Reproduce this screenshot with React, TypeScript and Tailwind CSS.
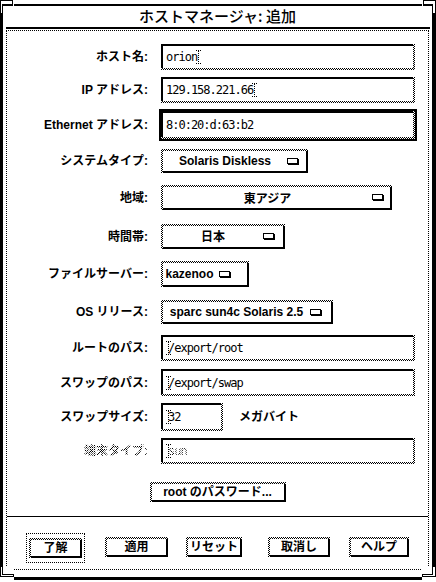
import React from 'react';

const stip = "bg-[repeating-conic-gradient(#000_0_25%,#fff_0_50%)] bg-[length:2px_2px]";

function Cursor({ className = "" }: { className?: string }) {
	return (
		<svg width="5" height="14" viewBox="0 0 5 14" className={className} shapeRendering="crispEdges">
			<path d="M0 0.5H5M2.5 1V13M0 13.5H5" stroke="#000" strokeWidth="1" strokeDasharray="1 1" fill="none" />
		</svg>
	);
}

function MenuMark() {
	return (
		<svg width="12" height="7" viewBox="0 0 12 7" shapeRendering="crispEdges">
			<path d="M0.5 0.5H10.5V5.5H0.5Z" stroke="#000" fill="#fff" />
			<path d="M1 6.5H12M11.5 1V7" stroke="#000" />
		</svg>
	);
}

// sunken text field: black top/left, dithered bottom/right
function Inset({ className, children }: { className: string; children?: React.ReactNode }) {
	return (
		<div className={`${stip} pr-[2px] pb-[2px] ${className}`}>
			<div className="h-full border-t-2 border-l-2 border-black bg-white flex items-center pl-[3px] font-['DejaVu_Sans_Mono',monospace] text-[12px] tracking-[-1px] leading-none">
				{children}
			</div>
		</div>
	);
}

// raised button: dithered top/left, black bottom/right
function Raised({ className, inner = "", children }: { className: string; inner?: string; children?: React.ReactNode }) {
	return (
		<div className={`${stip} pt-[2px] pl-[2px] ${className}`}>
			<div className={`h-full border-r-2 border-b-2 border-black bg-white flex items-center text-[12px] font-bold leading-none ${inner}`}>
				{children}
			</div>
		</div>
	);
}

function Row({ label, className, children, disabled, gap = "ml-[13px]" }: { label: string; className: string; children: React.ReactNode; disabled?: boolean; gap?: string }) {
	return (
		<div className={`flex items-center ${className}`}>
			<div className="w-[141px] text-right text-[12px] font-bold leading-none whitespace-nowrap">
				{disabled ? (
					<span className={`${stip} bg-clip-text text-transparent`}>{label}</span>
				) : label}
			</div>
			<div className={gap}>{children}</div>
		</div>
	);
}

function Menu({ className, inner = "", text, mark }: { className: string; inner?: string; text: string; mark: string }) {
	return (
		<Raised className={className} inner={inner}>
			<span className="flex-1 text-center whitespace-nowrap">{text}</span>
			<span className={`flex ${mark}`}><MenuMark /></span>
		</Raised>
	);
}

export default function App() {
	return (
		<div className="w-[436px] h-[582px] bg-white">
			<div className="relative w-[436px] h-[580px] border-l-[3px] border-r-[4px] border-b-[3px] border-black flex flex-col text-black font-['Liberation_Sans','Noto_Sans_CJK_JP',sans-serif]">
				{/* window corners */}
				<svg width="14" height="14" viewBox="0 0 14 14" className="absolute -left-[3px] top-0" shapeRendering="crispEdges">
					<rect x="0" y="0" width="14" height="14" fill="#fff" />
					<path d="M0 0h13v6h-10v8h-3z" fill="#000" />
					<path d="M1 1h11v3h-10v9h-1z" fill="#fff" />
				</svg>
				<svg width="14" height="14" viewBox="0 0 14 14" className="absolute -right-[4px] top-0" shapeRendering="crispEdges">
					<rect x="0" y="0" width="14" height="14" fill="#fff" />
					<path d="M14 0h-13v6h9v8h4z" fill="#000" />
					<path d="M13 1h-11v3h9v9h2z" fill="#fff" />
				</svg>
				<svg width="14" height="14" viewBox="0 0 14 14" className="absolute -left-[3px] -bottom-[3px]" shapeRendering="crispEdges">
					<rect x="0" y="0" width="14" height="14" fill="#fff" />
					<path d="M0 0h3v8h11v3h-14z" fill="#000" />
					<path d="M1 1h1v8h11v1h-12z" fill="#fff" />
				</svg>
				<svg width="14" height="14" viewBox="0 0 14 14" className="absolute -right-[4px] -bottom-[3px]" shapeRendering="crispEdges">
					<rect x="0" y="0" width="14" height="14" fill="#fff" />
					<path d="M14 0h-4v8h-10v3h14z" fill="#000" />
					<path d="M13 1h-2v8h-10v1h12z" fill="#fff" />
				</svg>

				<div className="mt-[4px] ml-[9px] mr-[8px] h-[2px] bg-black" />
				<div className="h-[21px] flex items-center justify-center pb-[2px] text-[15px] font-medium leading-none font-['Noto_Sans_CJK_JP',sans-serif]">
					ホストマネージャ: 追加
				</div>
				<div className="ml-[3px] mr-[2px] h-[2px] bg-black" />

				<div className="mt-[1px] mx-[3px] h-[540px] border border-dotted border-black flex flex-col">
					<Row label="ホスト名:" className="mt-[13px] h-[26px]">
						<Inset className="w-[254px] h-[26px]">orion<Cursor className="-ml-[1px]" /></Inset>
					</Row>
					<Row label="IP アドレス:" className="mt-[7px] h-[26px]">
						<Inset className="w-[254px] h-[26px]">129.158.221.66<Cursor className="-ml-[1px]" /></Inset>
					</Row>
					<Row label="Ethernet アドレス:" className="mt-[6px] h-[32px]" gap="ml-[11px]">
						<div className="border-2 border-black w-[258px] h-[32px]">
							<Inset className="w-[254px] h-[28px]">8:0:20:d:63:b2</Inset>
						</div>
					</Row>
					<Row label="システムタイプ:" className="mt-[8px] h-[24px]">
						<Menu className="w-[147px] h-[24px]" text="Solaris Diskless" mark="mr-[7px]" />
					</Row>
					<Row label="地域:" className="mt-[12px] h-[25px]">
						<Menu className="w-[231px] h-[25px]" inner="font-['Noto_Sans_CJK_JP',sans-serif]" text="東アジア" mark="mr-[6px]" />
					</Row>
					<Row label="時間帯:" className="mt-[14px] h-[25px]">
						<Menu className="w-[124px] h-[25px]" text="日本" mark="mr-[8px]" />
					</Row>
					<Row label="ファイルサーバー:" className="mt-[12px] h-[26px]">
						<Menu className="w-[88px] h-[26px]" inner="text-[11px]" text="kazenoo" mark="mr-[16px] ml-[3px]" />
					</Row>
					<Row label="OS リリース:" className="mt-[13px] h-[24px]">
						<Menu className="w-[172px] h-[24px]" inner="pl-[2px]" text="sparc sun4c Solaris 2.5" mark="mr-[9px] ml-[2px]" />
					</Row>
					<Row label="ルートのパス:" className="mt-[11px] h-[26px]">
						<Inset className="w-[254px] h-[26px]"><Cursor className="-mr-[3px]" />/export/root</Inset>
					</Row>
					<Row label="スワップのパス:" className="mt-[8px] h-[27px]">
						<Inset className="w-[254px] h-[27px]"><Cursor className="-mr-[3px]" />/export/swap</Inset>
					</Row>
					<Row label="スワップサイズ:" className="mt-[7px] h-[28px]">
						<div className="flex items-center">
							<Inset className="w-[62px] h-[28px]"><Cursor className="-mr-[3px]" />32</Inset>
							<span className="ml-[16px] text-[12px] font-bold leading-none">メガバイト</span>
						</div>
					</Row>
					<Row label="端末タイプ:" className="mt-[7px] h-[26px]" disabled>
						<Inset className="w-[254px] h-[26px]">
							<Cursor className="-mr-[3px]" />
							<span className={`${stip} bg-clip-text text-transparent`}>sun</span>
						</Inset>
					</Row>

					<div className="mt-[18px] flex justify-center">
						<Raised className="w-[136px] h-[20px]">
							<span className="flex-1 text-center whitespace-nowrap">root のパスワード...</span>
						</Raised>
					</div>

					<div className="mt-[14px] h-px bg-black" />

					<div className="mt-[16px] flex items-start">
						<div className="ml-[19px] w-[59px] h-[30px] border border-dotted border-black flex items-center justify-center">
							<Raised className="w-[53px] h-[20px]"><span className="flex-1 text-center">了解</span></Raised>
						</div>
						<Raised className="mt-[4px] ml-[20px] w-[63px] h-[20px]"><span className="flex-1 text-center">適用</span></Raised>
						<Raised className="mt-[4px] ml-[18px] w-[56px] h-[20px]"><span className="flex-1 text-center">リセット</span></Raised>
						<Raised className="mt-[4px] ml-[26px] w-[62px] h-[20px]"><span className="flex-1 text-center">取消し</span></Raised>
						<Raised className="mt-[4px] ml-[19px] w-[60px] h-[20px]"><span className="flex-1 text-center">ヘルプ</span></Raised>
					</div>
				</div>
			</div>
		</div>
	);
}
